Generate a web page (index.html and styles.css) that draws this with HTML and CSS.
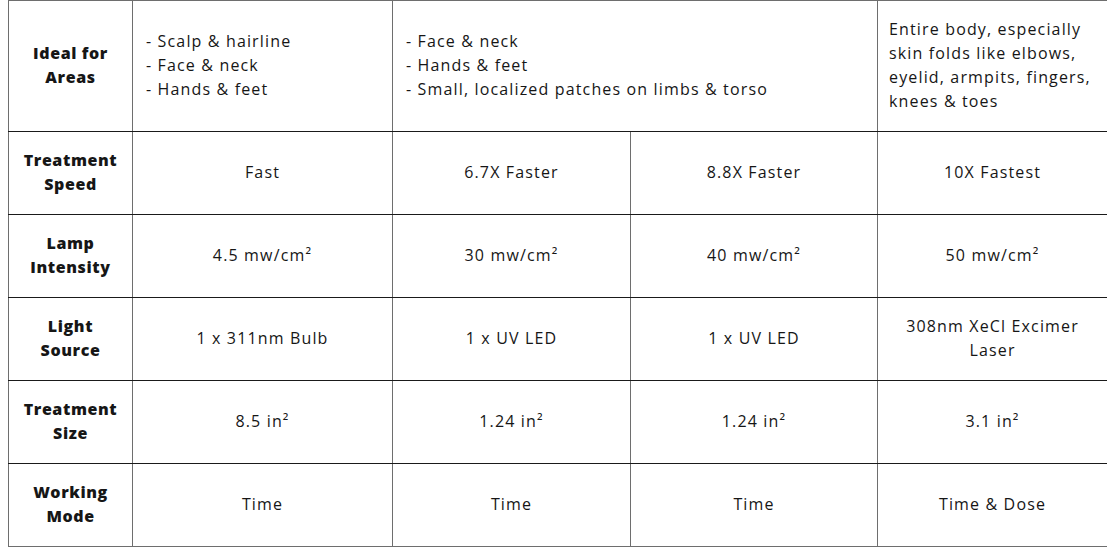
FILE: index.html
```html
<!DOCTYPE html>
<html lang="en">
<head>
<meta charset="utf-8">
<title>Comparison</title>
<link rel="stylesheet" href="styles.css">
</head>
<body>
<table class="spec">
  <colgroup>
    <col class="c-head">
    <col class="c-a">
    <col class="c-b">
    <col class="c-c">
    <col class="c-d">
  </colgroup>
  <tbody>
    <tr class="row-tall">
      <th>Ideal for<br>Areas</th>
      <td class="list">- Scalp &amp; hairline<br>- Face &amp; neck<br>- Hands &amp; feet</td>
      <td class="list" colspan="2">- Face &amp; neck<br>- Hands &amp; feet<br>- Small, localized patches on limbs &amp; torso</td>
      <td class="list list-r">Entire body, especially skin folds like elbows, eyelid, armpits, fingers, knees &amp; toes</td>
    </tr>
    <tr>
      <th>Treatment<br>Speed</th>
      <td>Fast</td>
      <td>6.7X Faster</td>
      <td>8.8X Faster</td>
      <td>10X Fastest</td>
    </tr>
    <tr>
      <th>Lamp<br>Intensity</th>
      <td>4.5 mw/cm²</td>
      <td>30 mw/cm²</td>
      <td>40 mw/cm²</td>
      <td>50 mw/cm²</td>
    </tr>
    <tr>
      <th>Light<br>Source</th>
      <td>1 x 311nm Bulb</td>
      <td>1 x UV LED</td>
      <td>1 x UV LED</td>
      <td>308nm XeCl Excimer Laser</td>
    </tr>
    <tr>
      <th>Treatment<br>Size</th>
      <td>8.5 in²</td>
      <td>1.24 in²</td>
      <td>1.24 in²</td>
      <td>3.1 in²</td>
    </tr>
    <tr>
      <th>Working<br>Mode</th>
      <td>Time</td>
      <td>Time</td>
      <td>Time</td>
      <td>Time &amp; Dose</td>
    </tr>
  </tbody>
</table>
</body>
</html>
```

FILE: styles.css
```css
html, body {
  background: #ffffff;
}
body {
  margin: 0 8px;
  font-family: "Open Sans", "Liberation Sans", sans-serif;
  color: #161616;
}
.spec {
  border-collapse: collapse;
  table-layout: fixed;
  width: 1099px;
  font-size: 16px;
  line-height: 24px;
}
.c-head { width: 124px; }
.c-a { width: 260px; }
.c-b { width: 238px; }
.c-c { width: 247px; }
.c-d { width: 230px; }

.spec tr { height: 83px; }
.spec tr.row-tall { height: 131px; }

.spec th,
.spec td {
  border-left: 1px solid #6e6e6e;
  border-right: 1px solid #6e6e6e;
  border-top: 1px solid #1a1a1a;
  border-bottom: 1px solid #1a1a1a;
  text-align: center;
  vertical-align: middle;
  padding: 0 12px 2px;
  font-weight: 400;
  letter-spacing: 1.15px;
}
.spec tr:first-child th,
.spec tr:first-child td {
  border-top-color: #6e6e6e;
}
.spec tr:last-child th,
.spec tr:last-child td {
  border-bottom-color: #6e6e6e;
}
.spec tr td:last-child {
  border-right-color: #1a1a1a;
}
.spec th {
  font-weight: 800;
  padding: 0 4px 2px;
  letter-spacing: 0.6px;
}
.spec td.list {
  text-align: left;
  padding-left: 13px;
}
.spec td.list-r {
  padding-left: 11px;
  padding-right: 12px;
}
```
